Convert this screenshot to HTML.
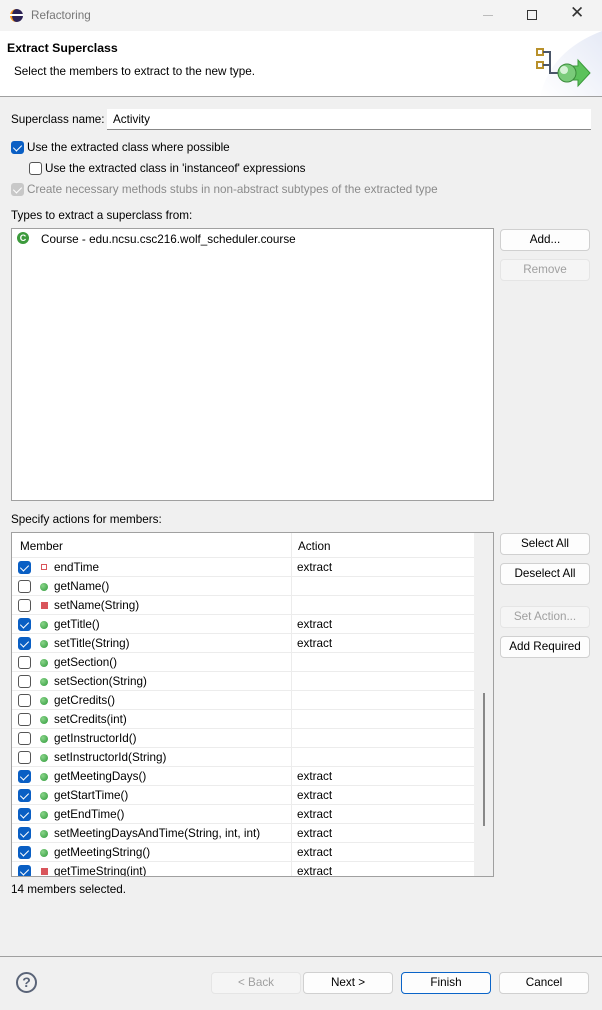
<!DOCTYPE html>
<html><head><style>
*{box-sizing:border-box;margin:0;padding:0}
body{width:602px;height:1010px;background:#f0f0f0;font-family:"Liberation Sans",sans-serif;font-size:11.7px;color:#000;position:relative;overflow:hidden}
.a{position:absolute}
.btn{position:absolute;background:#fdfdfd;border:1px solid #d0d0d0;border-radius:4px;text-align:center;font-size:11.7px;line-height:20px;height:22px}
.dis{background:#f5f5f5;border-color:#e5e5e5;color:#a0a0a0}
.cb{position:absolute;width:13px;height:13px;border:1px solid #555;border-radius:3px;background:#fff}
.cb.on{background:#0a5fc4;border-color:#0a5fc4}
.cb.on::after{content:"";position:absolute;left:3px;top:1px;width:4px;height:7px;border:solid #fff;border-width:0 1.3px 1.3px 0;transform:rotate(45deg)}
.row{position:absolute;left:12px;width:462px;height:19px;border-bottom:1px solid #ececec}
.row span{position:absolute;top:3px}
.ic{position:absolute;top:6px;left:28px;width:8px;height:8px;border-radius:50%;background:radial-gradient(circle at 35% 35%,#8ad48a,#2e9a3a)}
.ic.r{border-radius:0;background:#d9555b;width:7px;height:7px;left:29px}
.ic.f{border-radius:0;background:#fff;border:1.5px solid #d9555b;width:6px;height:6px;left:29px}
</style></head><body>
<div class="a" style="left:0;top:0;width:602px;height:31px;background:#f3f3f3"></div>
<div class="a" style="left:10px;top:9px;width:13px;height:13px;border-radius:50%;background:#2c2255;border-left:2px solid #f7941e"></div>
<div class="a" style="left:10px;top:14px;width:13px;height:2px;background:#fff"></div>
<div class="a" style="left:31px;top:9px;color:#777">Refactoring</div>
<div class="a" style="left:483px;top:15px;width:10px;height:1px;background:#bbb"></div>
<div class="a" style="left:527px;top:10px;width:10px;height:10px;border:1px solid #333"></div>
<div class="a" style="left:570px;top:3px;font-size:17px;color:#333">✕</div>
<div class="a" style="left:0;top:31px;width:602px;height:66px;background:#fff;border-bottom:1px solid #a0a0a0"></div>
<div class="a" style="left:7px;top:41px;font-weight:bold;font-size:12.3px">Extract Superclass</div>
<div class="a" style="left:14px;top:65px">Select the members to extract to the new type.</div>
<svg class="a" style="left:520px;top:31px" width="82" height="65"><defs><linearGradient id="g" x1="0" y1="1" x2="1" y2="0"><stop offset="0" stop-color="#fff"/><stop offset="1" stop-color="#e6eaf6"/></linearGradient></defs><path d="M20 66 Q30 20 82 0 L82 66Z" fill="url(#g)"/>
<g transform="translate(10,13)"><rect x="7" y="5" width="6" height="6" fill="#fff" stroke="#b8902a" stroke-width="2"/><rect x="7" y="18" width="6" height="6" fill="#fff" stroke="#b8902a" stroke-width="2"/><path d="M13 8 H20 V29 H28 M13 21 H20" stroke="#4a5568" stroke-width="2" fill="none"/><path d="M38 22 H48 V16 L60 29 L48 42 V36 H38Z" fill="#5cc25c" stroke="#3a9a3a"/><circle cx="37" cy="29" r="9" fill="#7acb7a" stroke="#3a8a3a"/><circle cx="34" cy="26" r="4" fill="#d6f2d6"/></g></svg>

<div class="a" style="left:11px;top:113px">Superclass name:</div>
<div class="a" style="left:107px;top:109px;width:484px;height:21px;background:#fff;border-bottom:1px solid #888;padding:4px 6px">Activity</div>
<div class="cb on" style="left:11px;top:141px"></div><div class="a" style="left:27px;top:141px">Use the extracted class where possible</div>
<div class="cb" style="left:29px;top:162px"></div><div class="a" style="left:45px;top:162px">Use the extracted class in 'instanceof' expressions</div>
<div class="cb on" style="left:11px;top:183px;background:#c8c8c8;border-color:#c8c8c8"></div><div class="a" style="left:27px;top:183px;color:#8a8a8a">Create necessary methods stubs in non-abstract subtypes of the extracted type</div>

<div class="a" style="left:11px;top:209px">Types to extract a superclass from:</div>
<div class="a" style="left:11px;top:228px;width:483px;height:273px;background:#fff;border:1px solid #a0a0a0"></div>
<div class="a" style="left:17px;top:232px;width:12px;height:12px;border-radius:50%;background:#3c9a3c;color:#fff;font-size:9px;font-weight:bold;text-align:center;line-height:12px">C</div>
<div class="a" style="left:41px;top:233px">Course - edu.ncsu.csc216.wolf_scheduler.course</div>
<div class="btn" style="left:500px;top:229px;width:90px">Add...</div>
<div class="btn dis" style="left:500px;top:259px;width:90px">Remove</div>

<div class="a" style="left:11px;top:513px">Specify actions for members:</div>
<div class="a" style="left:11px;top:532px;width:483px;height:345px;background:#fff;border:1px solid #a0a0a0;overflow:hidden">
<div class="a" style="left:0;top:0;width:462px;height:25px;border-bottom:1px solid #ececec"></div>
<div class="a" style="left:8px;top:7px">Member</div>
<div class="a" style="left:279px;top:0;width:1px;height:345px;background:#ececec"></div>
<div class="a" style="left:286px;top:7px">Action</div>
<div class="a" style="left:462px;top:0;width:20px;height:345px;background:#f0f0f0"></div>
<div class="a" style="left:471px;top:160px;width:2px;height:133px;background:#888"></div>
</div>
<div id="rows"></div>
<script>
var d=[["endTime",1,"f"],["getName()",0,""],["setName(String)",0,"r"],["getTitle()",1,""],["setTitle(String)",1,""],["getSection()",0,""],["setSection(String)",0,""],["getCredits()",0,""],["setCredits(int)",0,""],["getInstructorId()",0,""],["setInstructorId(String)",0,""],["getMeetingDays()",1,""],["getStartTime()",1,""],["getEndTime()",1,""],["setMeetingDaysAndTime(String, int, int)",1,""],["getMeetingString()",1,""],["getTimeString(int)",1,"r"]];
var h="";d.forEach(function(r,i){var t=558+19*i;h+='<div class="row" style="top:'+t+'px;'+(t+19>876?'height:'+(876-t)+'px;overflow:hidden;border:0':'')+'"><div class="cb'+(r[1]?' on':'')+'" style="left:6px;top:3px"></div><div class="ic '+r[2]+'"></div><span style="left:42px">'+r[0]+'</span>'+(r[1]?'<span style="left:285px">extract</span>':'')+'<div style="position:absolute;left:279px;top:0;width:1px;height:19px;background:#ececec"></div></div>';});
document.getElementById("rows").innerHTML=h;
</script>
<div class="btn" style="left:500px;top:533px;width:90px">Select All</div>
<div class="btn" style="left:500px;top:563px;width:90px">Deselect All</div>
<div class="btn dis" style="left:500px;top:606px;width:90px">Set Action...</div>
<div class="btn" style="left:500px;top:636px;width:90px">Add Required</div>
<div class="a" style="left:11px;top:883px">14 members selected.</div>

<div class="a" style="left:0;top:956px;width:602px;height:1px;background:#a0a0a0"></div>
<div class="a" style="left:16px;top:972px;width:21px;height:21px;border:2px solid #5a6478;border-radius:50%;color:#5a6478;font-weight:bold;font-size:14px;text-align:center;line-height:17px">?</div>
<div class="btn dis" style="left:211px;top:972px;width:90px">&lt; Back</div>
<div class="btn" style="left:303px;top:972px;width:90px">Next &gt;</div>
<div class="btn" style="left:401px;top:972px;width:90px;border-color:#0a64c8">Finish</div>
<div class="btn" style="left:499px;top:972px;width:90px">Cancel</div>
</body></html>
